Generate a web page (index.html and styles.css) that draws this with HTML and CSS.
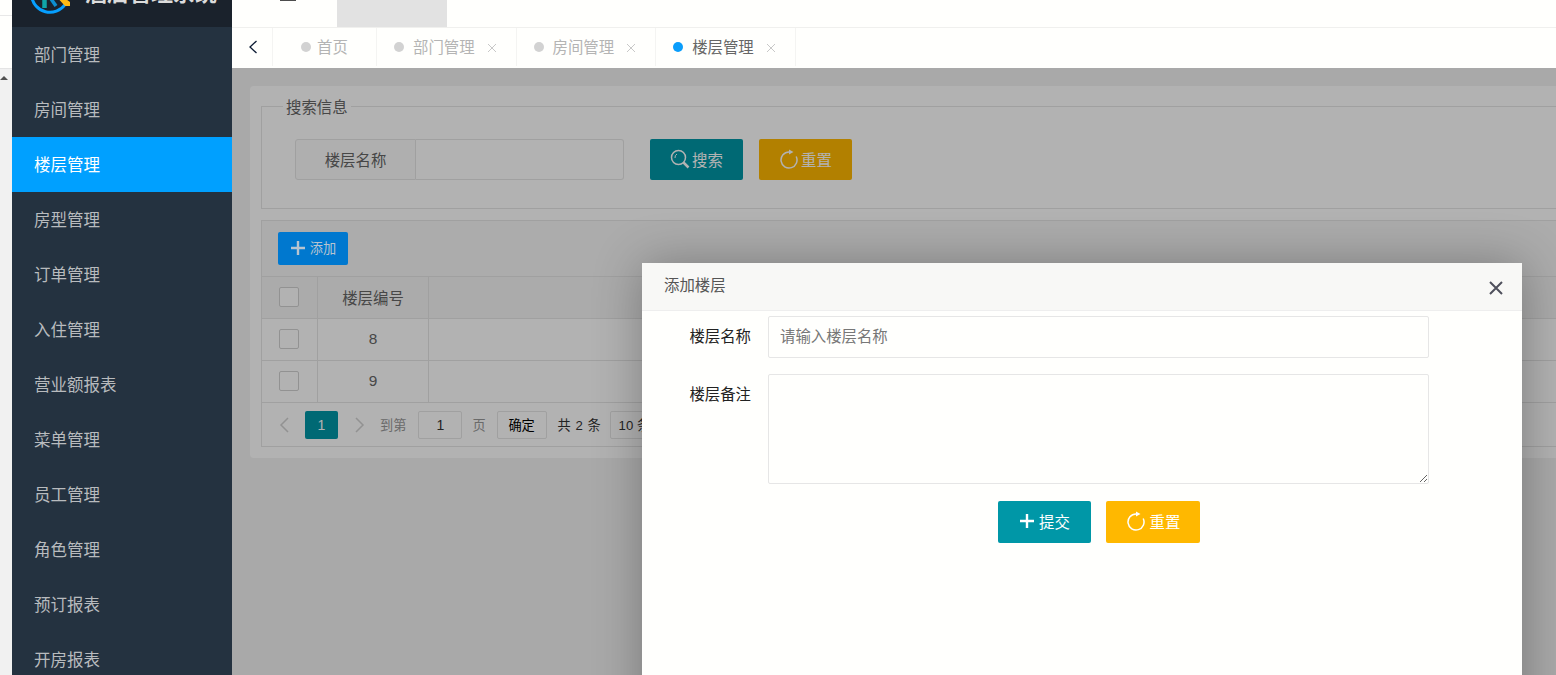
FILE: index.html
```html
<!DOCTYPE html>
<html lang="zh-CN">
<head>
<meta charset="utf-8">
<title>酒店管理系统</title>
<link rel="stylesheet" href="styles.css">
</head>
<body>
<div class="page">
  <div class="strip">
    <div class="strip-top"></div>
    <div class="strip-mid"></div>
    <div class="strip-scroll"><span class="scroll-arrow"></span></div>
  </div>
  <aside class="sidebar">
    <div class="logo">
      <svg class="logo-mark" width="40" height="40" viewBox="0 0 40 40">
        <path d="M1.600 22a18.500 18.500 0 0 0 33.500 8.500" fill="none" stroke="#069fff" stroke-width="3"/>
        <path d="M14.500 20v14" stroke="#10a5a8" stroke-width="4.500"/>
        <path d="M19 22l7 10" stroke="#0d8fd0" stroke-width="3.500"/>
        <path d="M24 20h5l11 8v4h-5z" fill="#fdb913"/>
      </svg>
      <span class="logo-text">酒店管理系统</span>
    </div>
    <nav class="menu">
      <a class="menu-item">部门管理</a>
      <a class="menu-item">房间管理</a>
      <a class="menu-item active">楼层管理</a>
      <a class="menu-item">房型管理</a>
      <a class="menu-item">订单管理</a>
      <a class="menu-item">入住管理</a>
      <a class="menu-item">营业额报表</a>
      <a class="menu-item">菜单管理</a>
      <a class="menu-item">员工管理</a>
      <a class="menu-item">角色管理</a>
      <a class="menu-item">预订报表</a>
      <a class="menu-item">开房报表</a>
    </nav>
  </aside>
  <main class="main">
    <header class="topbar">
      <span class="hamburger"></span>
      <span class="top-tab"></span>
    </header>
    <div class="tabs">
      <span class="tab-back">
        <svg width="10" height="14" viewBox="0 0 10 14"><path d="M8.500 1L2 7l6.500 6" fill="none" stroke="#0b1a33" stroke-width="1.300"/></svg>
      </span>
      <span class="tab tab-home"><i class="dot"></i>首页</span>
      <span class="tab"><i class="dot"></i><span class="tab-label">部门管理</span><svg class="tab-x" width="10" height="10" viewBox="0 0 10 10"><path d="M1 1l8 8M9 1l-8 8" stroke="#c8c8c8" stroke-width="1"/></svg></span>
      <span class="tab"><i class="dot"></i><span class="tab-label">房间管理</span><svg class="tab-x" width="10" height="10" viewBox="0 0 10 10"><path d="M1 1l8 8M9 1l-8 8" stroke="#c8c8c8" stroke-width="1"/></svg></span>
      <span class="tab tab-on"><i class="dot"></i><span class="tab-label">楼层管理</span><svg class="tab-x" width="10" height="10" viewBox="0 0 10 10"><path d="M1 1l8 8M9 1l-8 8" stroke="#c8c8c8" stroke-width="1"/></svg></span>
    </div>
    <section class="content">
      <div class="card">
        <fieldset class="search">
          <legend>搜索信息</legend>
          <form class="search-row">
            <label class="search-label">楼层名称</label>
            <input class="search-input" type="text">
            <button class="btn teal" type="button">
              <svg class="ico" width="20" height="20" viewBox="0 0 20 20"><circle cx="8.500" cy="8.500" r="7" fill="none" stroke="currentColor" stroke-width="1.500"/><path d="M5 9a4 4 0 0 1 2-4" fill="none" stroke="currentColor" stroke-width="1"/><path d="M13.500 13.500l5 5" stroke="currentColor" stroke-width="2.500"/></svg>搜索
            </button>
            <button class="btn amber" type="button">
              <svg class="ico" width="20" height="20" viewBox="0 0 20 20"><path d="M10 3A8 8 0 1 0 17.200 7.500" fill="none" stroke="currentColor" stroke-width="1.500"/><path d="M10 .5L14.500 3 10 5.500z" fill="currentColor"/></svg>重置
            </button>
          </form>
        </fieldset>
        <div class="table-box">
          <div class="toolbar">
            <button class="btn-add" type="button">
              <svg width="14" height="14" viewBox="0 0 14 14"><path d="M7 0v14M0 7h14" stroke="currentColor" stroke-width="2.400"/></svg>添加
            </button>
          </div>
          <table class="grid">
            <thead>
              <tr><th class="c1"><span class="check"></span></th><th class="c2">楼层编号</th><th></th></tr>
            </thead>
            <tbody>
              <tr><td class="c1"><span class="check"></span></td><td class="c2">8</td><td></td></tr>
              <tr><td class="c1"><span class="check"></span></td><td class="c2">9</td><td></td></tr>
            </tbody>
          </table>
          <div class="pager">
            <svg class="pg-arrow" width="10" height="16" viewBox="0 0 10 16"><path d="M9 1L2 8l7 7" fill="none" stroke="#d2d2d2" stroke-width="1.500"/></svg>
            <span class="pg-cur">1</span>
            <svg class="pg-arrow pg-next" width="10" height="16" viewBox="0 0 10 16"><path d="M1 1l7 7-7 7" fill="none" stroke="#d2d2d2" stroke-width="1.500"/></svg>
            <span class="pg-text pg-to">到第</span>
            <span class="pg-box pg-input">1</span>
            <span class="pg-text">页</span>
            <span class="pg-box pg-ok">确定</span>
            <span class="pg-total">共 2 条</span>
            <span class="pg-box pg-select">10 条/页</span>
          </div>
        </div>
      </div>
    </section>
  </main>
  <div class="overlay"></div>
  <div class="modal">
    <div class="modal-head">
      <span>添加楼层</span>
      <svg class="modal-close" width="14" height="14" viewBox="0 0 14 14"><path d="M1 1l12 12M13 1L1 13" stroke="#4f505c" stroke-width="2"/></svg>
    </div>
    <form class="modal-form">
      <label class="f-label">楼层名称</label>
      <input class="f-input" type="text" placeholder="请输入楼层名称">
      <label class="f-label">楼层备注</label>
      <textarea class="f-area"></textarea>
      <div class="f-actions">
        <button class="btn teal btn-lit" type="button">
          <svg class="ico" width="16" height="16" viewBox="0 0 16 16"><path d="M8 1v14M1 8h14" stroke="currentColor" stroke-width="2.400"/></svg>提交
        </button>
        <button class="btn amber btn-lit" type="button">
          <svg class="ico" width="20" height="20" viewBox="0 0 20 20"><path d="M10 3A8 8 0 1 0 17.200 7.500" fill="none" stroke="currentColor" stroke-width="1.500"/><path d="M10 .5L14.500 3 10 5.500z" fill="currentColor"/></svg>重置
        </button>
      </div>
    </form>
  </div>
</div>
</body>
</html>
```
FILE: styles.css
```css
* { box-sizing: border-box; }
html, body { margin: 0; height: 100%; overflow: hidden; }
body {
  font-family: "Liberation Sans", "Noto Sans CJK SC", sans-serif;
  font-size: 15.4px;
  color: #666;
  background: #fffffd;
}
button, input, textarea { font-family: inherit; }

.page { position: relative; display: flex; width: 1556px; height: 675px; overflow: hidden; }

/* left sliver of the neighbouring window */
.strip { width: 12px; flex: none; display: flex; flex-direction: column; }
.strip-top { height: 16px; border-bottom: 1px solid #e8e8e8; }
.strip-mid { height: 53px; border-bottom: 1px solid #e4e4e4; }
.strip-scroll { flex: 1; background: #f1f1f1; padding-top: 7px; }
.scroll-arrow {
  display: block; width: 0; height: 0; margin-left: 0;
  border-left: 4px solid transparent; border-right: 4px solid transparent; border-bottom: 4px solid #505050;
}

/* sidebar */
.sidebar { width: 220px; flex: none; background: #243240; overflow: hidden; }
.logo {
  height: 27px; background: #1a222c; display: flex; align-items: flex-end;
  padding: 0 0 13px 18px; overflow: hidden;
}
.logo-mark { flex: none; display: block; }
.logo-text {
  flex: none; margin: 0 0 5px 15px; font-size: 22px; line-height: 30px;
  font-weight: 700; color: #dcdcdc; white-space: nowrap;
}
.menu-item {
  display: block; height: 55px; line-height: 57px; padding-left: 22px;
  font-size: 16.500px; color: #b8bbbe;
}
.menu-item.active { background: #00a0ff; color: #fff; }

/* main column */
.main { flex: 1; min-width: 0; display: flex; flex-direction: column; background: #f2f2f2; }
.topbar {
  height: 28px; flex: none; display: flex; align-items: flex-start;
  padding-left: 48px; background: #fffffd; border-bottom: 1px solid #f0f0ee;
}
.hamburger { width: 16px; height: 1px; background: #4d4d4d; }
.top-tab { width: 110px; height: 27px; margin-left: 41px; background: #e2e2e2; }

.tabs {
  height: 40px; flex: none; display: flex; background: #fffffd; padding-bottom: 2px;
  font-size: 15.4px; color: #b4b4b4;
}
.tab-back {
  width: 41px; flex: none; display: flex; align-items: center; justify-content: center;
  padding-left: 2px; border-right: 1px solid #f4f4f2;
}
.tab {
  display: flex; align-items: center; height: 100%; flex: none;
  padding: 0 19px 2px 17px; border-right: 1px solid #f4f4f2; white-space: nowrap;
}
.tab-home { padding: 0 29px 2px 28px; width: 104px; }
.tab-home .dot { margin-right: 6px; }
.dot { width: 10px; height: 10px; border-radius: 50%; background: #d2d2d2; margin: 2px 9px 0 0; flex: none; }
.tab-x { margin: 4px 0 0 12px; flex: none; }
.tab-on { color: #666; }
.tab-on .dot { background: #0a9dfb; }

.content { flex: 1; min-height: 0; padding: 18px 0 0 18px; overflow: hidden; }
.card {
  width: 1340px; height: 372px; background: #fff; border-radius: 4px; padding: 8px 0 0 11px;
}

/* search form */
.search {
  margin: 0 0 11px; padding: 21px 0 28px 33px; height: 115px;
  border: 1px solid #e6e6e6; min-width: 0;
}
.search legend { margin-left: -12px; padding: 4px 3px 0; line-height: 20px; color: #666; }
.search-row { display: flex; align-items: stretch; height: 41px; }
.search-label {
  width: 121px; flex: none; display: flex; align-items: center; justify-content: center;
  padding-bottom: 2px; border: 1px solid #e6e6e6; border-radius: 3px 0 0 3px; background: #fbfbfb;
}
.search-input {
  width: 208px; flex: none; border: 1px solid #e6e6e6; border-left: 0; border-radius: 0 3px 3px 0;
  background: #fff; margin-right: 26px; outline: 0;
}
.btn {
  width: 93px; flex: none; border: 0; border-radius: 2px; padding: 0 0 2px;
  display: inline-flex; align-items: center; justify-content: center;
  color: #fff; font-size: 15.4px;
}
.btn .ico { margin-right: 2px; }
.teal { background: #0097a7; }
.amber { background: #ffb800; margin-left: 16px; }

/* data table */
.table-box { border: 1px solid #e6e6e6; width: 100%; }
.toolbar { height: 55px; padding: 11px 0 0 16px; background: #f7f7f7; }
.btn-add {
  position: relative; z-index: 1;
  width: 70px; height: 33px; border: 0; border-radius: 2px; padding: 0 0 2px 1px;
  display: flex; align-items: center; justify-content: center; gap: 5px;
  background: #0078cf; color: #b8c4d0; font-size: 13.200px;
}
.grid { width: 100%; border-collapse: separate; border-spacing: 0; table-layout: fixed; }
.grid th, .grid td {
  height: 42px; padding: 0 0 2px; border-top: 1px solid #e6e6e6; border-right: 1px solid #e6e6e6;
  text-align: center; font-weight: 400; font-size: 15.4px; color: #666;
}
.grid th { background: #f5f5f5; }
.grid td { background: #fff; }
.c1 { width: 56px; }
.c2 { width: 111px; }
.check {
  display: block; width: 20px; height: 20px; margin: 0 auto 0 17px;
  border: 1px solid #d2d2d2; border-radius: 2px; background: #fff;
}

/* pager */
.pager {
  height: 44px; display: flex; align-items: center; padding-left: 17px;
  border-top: 1px solid #e6e6e6; font-size: 13.200px; background: #fff;
}
.pg-arrow { flex: none; }
.pg-cur {
  width: 33px; height: 28px; margin-left: 16px; border-radius: 2px; background: #0097a7; color: #fff;
  display: flex; align-items: center; justify-content: center; font-size: 14px;
}
.pg-next { margin-left: 17px; }
.pg-text { color: #999; }
.pg-to { margin-left: 15px; }
.pg-box {
  height: 28px; border: 1px solid #e6e6e6; border-radius: 2px; flex: none;
  display: flex; align-items: center; justify-content: center; color: #333;
}
.pg-input { width: 44px; margin: 0 10px 0 12px; font-size: 14px; }
.pg-ok { width: 50px; margin-left: 11px; color: #000; }
.pg-total { margin-left: 11px; color: #333; word-spacing: 1px; white-space: nowrap; }
.pg-select { width: 100px; margin-left: 9px; justify-content: flex-start; padding-left: 8px; white-space: nowrap; }

/* dialog */
.overlay { position: absolute; left: 232px; top: 68px; right: 0; bottom: 0; background: rgba(0,0,0,.3); }
.modal {
  position: absolute; z-index: 2; left: 642px; top: 263px; width: 880px; height: 600px;
  background: #fffffd; box-shadow: 1px 1px 50px rgba(0,0,0,.3); border-radius: 2px 2px 0 0;
}
.modal-head {
  height: 48px; display: flex; align-items: center; justify-content: space-between;
  padding: 0 19px 5px 22px; background: #f8f8f6; border-bottom: 1px solid #eee;
  font-size: 15.4px; color: #555;
}
.modal-close { margin-top: 7px; }
.modal-form {
  display: grid; grid-template-columns: 109px 661px; column-gap: 17px; row-gap: 16px;
  padding-top: 5px; align-items: start;
}
.f-label { text-align: right; line-height: 42px; color: #222; font-size: 15.4px; }
.f-input, .f-area {
  width: 100%; border: 1px solid #e6e6e6; border-radius: 2px; background: #fffffd; outline: 0;
  font-size: 15.4px; color: #333; margin: 0;
}
.f-input { height: 42px; padding: 0 11px; }
.f-input::placeholder { color: #777; }
.f-area { height: 110px; display: block; resize: both; }
.f-actions { grid-column: 1 / 3; display: flex; height: 42px; margin-top: 1px; padding-left: 356px; }
.btn-lit.amber { width: 94px; margin-left: 15px; }
.btn-lit .ico { margin-right: 4px; }
```
